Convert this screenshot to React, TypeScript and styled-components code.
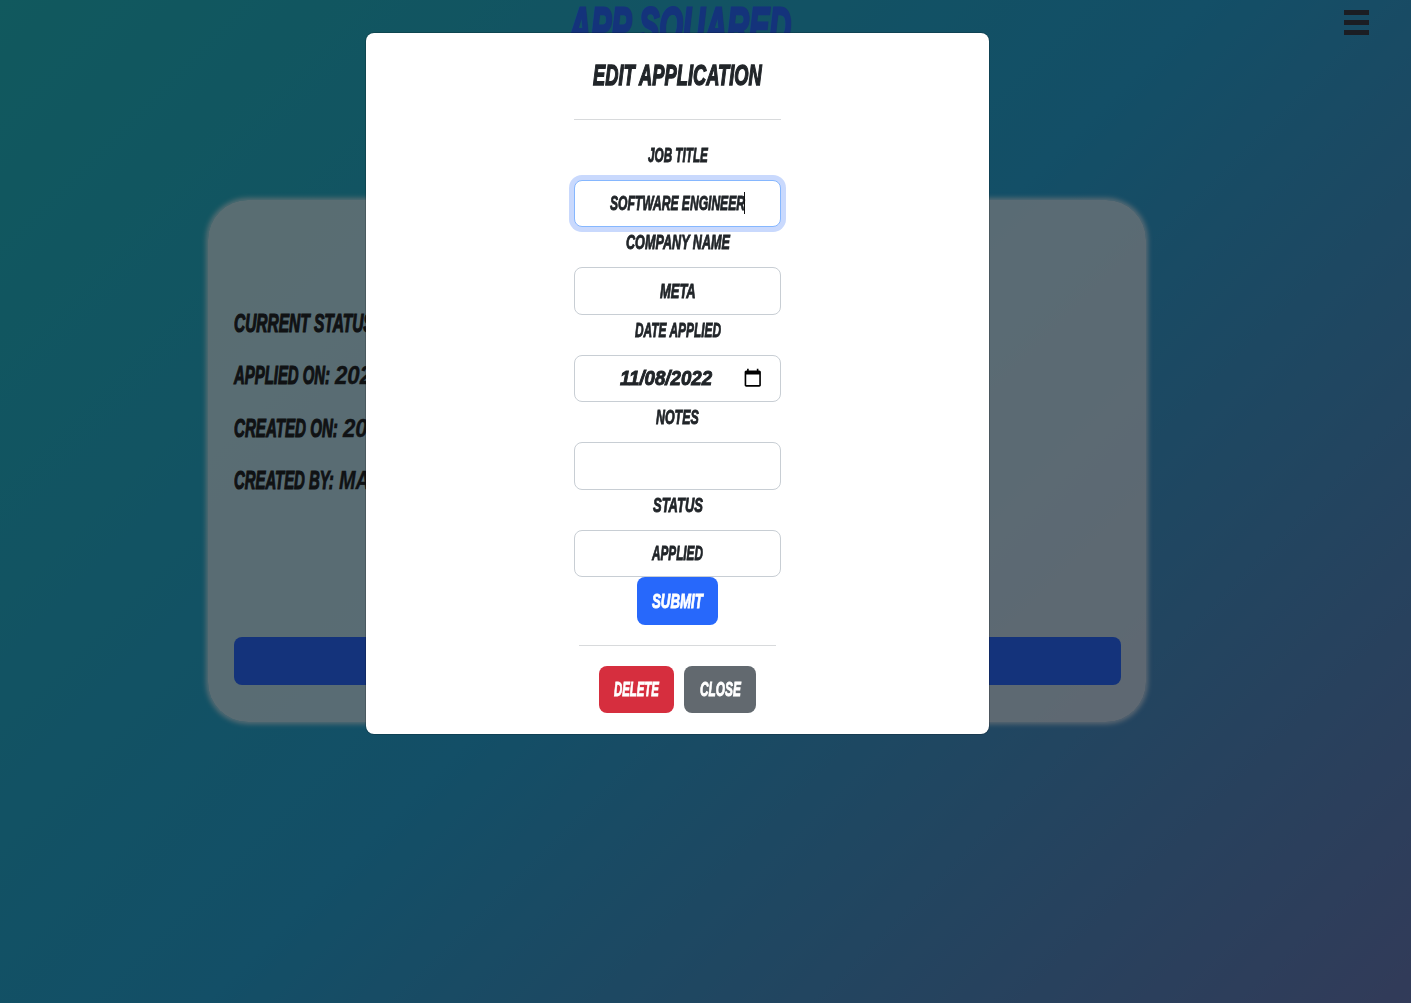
import React, { useLayoutEffect, useRef, useState } from "react";
import styled, { createGlobalStyle, css } from "styled-components";

const GlobalStyle = createGlobalStyle`
  *, *::before, *::after { box-sizing: border-box; }
  body {
    margin: 0;
    color: #212529;
    font-family: "Liberation Sans Narrow", "Liberation Sans", Arial, sans-serif;
    overflow: hidden;
  }
`;

const Frame = styled.span<{ $width: number; $size: number }>`
  display: inline-block;
  flex: none;
  width: ${(p) => p.$width}px;
  height: ${(p) => p.$size}px;
  font-size: ${(p) => p.$size}px;
  line-height: ${(p) => p.$size}px;
  text-align: left;
`;

const Glyphs = styled.span<{ $stroke: number }>`
  display: inline-block;
  font-weight: 700;
  font-style: italic;
  white-space: nowrap;
  transform-origin: 0 50%;
  -webkit-text-stroke: ${(p) => p.$stroke}px currentColor;
`;

interface LetteringProps {
  width: number;
  size?: number;
  stroke?: number;
  children: string;
}

/* Condensed comic lettering: squeezes its text to the given width. */
function Lettering({ width, size = 20.5, stroke = 0.9, children }: LetteringProps) {
  const ref = useRef<HTMLSpanElement>(null);
  const [scale, setScale] = useState(1);
  useLayoutEffect(() => {
    if (ref.current) setScale(width / ref.current.offsetWidth);
  }, [width, size, children]);
  return (
    <Frame $width={width} $size={size}>
      <Glyphs ref={ref} $stroke={stroke} style={{ transform: `scaleX(${scale})` }}>{children}</Glyphs>
    </Frame>
  );
}

const Page = styled.div`
  min-height: 1003px;
  background: linear-gradient(135deg, rgb(34, 178, 188) 0%, rgb(38, 158, 206) 50%, rgb(100, 118, 178) 100%);
`;

const Header = styled.header`
  display: grid;
  grid-template-columns: 1fr auto 1fr;
  height: 199.5px;
  align-items: start;
`;

const Brand = styled.h1`
  grid-column: 2;
  display: flex;
  margin: 0;
  padding-right: 52px;
  color: #2866f6;
`;

const MenuButton = styled.button`
  justify-self: end;
  display: flex;
  flex-direction: column;
  gap: 5px;
  width: 25px;
  margin: 10px 42px 0 0;
  padding: 0;
  border: 0;
  background: none;
`;

const MenuBar = styled.span`
  height: 5px;
  background: #373a47;
`;

const Card = styled.section`
  display: flex;
  flex-direction: column;
  width: 938px;
  height: 522px;
  margin-left: 208px;
  padding: 110px 25px 36.5px 26px;
  border-radius: 40px;
  background: rgba(240, 240, 244, 0.7);
  box-shadow: 0 0 5px 2px rgba(240, 240, 244, 0.7);
`;

const Fact = styled.p`
  display: flex;
  align-items: center;
  gap: 5px;
  height: 27px;
  margin: 0 0 25.5px;
`;

const CardAction = styled.button`
  height: 48px;
  margin-top: auto;
  border: 0;
  border-radius: 8px;
  background: #2866f6;
`;

const Backdrop = styled.div`
  position: fixed;
  inset: 0;
  display: flex;
  align-items: flex-start;
  padding: 32px 0 0 365px;
  background: rgba(0, 0, 0, 0.5);
`;

const Dialog = styled.div`
  display: flex;
  flex-direction: column;
  align-items: center;
  width: 625px;
  height: 703px;
  padding-top: 27px;
  border: 1px solid rgba(0, 0, 0, 0.175);
  border-radius: 9px;
  background: #fff;
  background-clip: padding-box;
`;

const Title = styled.h2`
  display: flex;
  height: 31px;
  margin: 0;
`;

const Rule = styled.hr<{ $width: number; $top: number; $bottom: number }>`
  flex: none;
  width: ${(p) => p.$width}px;
  height: 1px;
  margin: ${(p) => p.$top}px 0 ${(p) => p.$bottom}px;
  border: 0;
  background: #d8dadc;
`;

const Form = styled.form`
  display: flex;
  flex-direction: column;
  align-items: center;
  width: 207px;
`;

const Label = styled.label`
  display: flex;
  height: 40px;
  padding-top: 5px;
`;

const Field = styled.div<{ $focused?: boolean }>`
  position: relative;
  display: flex;
  align-items: center;
  justify-content: center;
  width: 207px;
  height: 47.5px;
  border: 1px solid #c8ced4;
  border-radius: 8px;
  background: #fff;
  ${(p) =>
    p.$focused &&
    css`
      border-color: #86b7fe;
      box-shadow: 0 0 0 5px #c9d9fd;
    `}
`;

const Caret = styled.span`
  position: absolute;
  left: 169px;
  top: 11px;
  width: 1px;
  height: 22px;
  background: #111;
`;

const DateValue = styled.div`
  display: flex;
  align-items: center;
  justify-content: space-between;
  width: 100%;
  padding: 0 17.5px 0 45px;
`;

const Button = styled.button<{ $width: number; $color: string }>`
  display: flex;
  align-items: center;
  justify-content: center;
  width: ${(p) => p.$width}px;
  height: 47.5px;
  padding: 0;
  border: 0;
  border-radius: 8px;
  font-family: inherit;
  color: #fff;
  background: ${(p) => p.$color};
`;

const Actions = styled.div`
  display: flex;
  gap: 10px;
`;

const Calendar = styled.svg`
  margin-top: -1px;
`;

const CalendarIcon = () => (
  <Calendar width="19.5" height="19.5" viewBox="0 0 24 24" fill="#000">
    <path d="M20 3h-1V1h-2v2H7V1H5v2H4c-1.1 0-2 .9-2 2v16c0 1.1.9 2 2 2h16c1.1 0 2-.9 2-2V5c0-1.1-.9-2-2-2zm0 18H4V8h16v13z" />
  </Calendar>
);

const facts = [
  { name: "CURRENT STATUS:", width: 145, value: "APPLIED", valueWidth: 60 },
  { name: "APPLIED ON:", width: 96, value: "2022-11-08", valueWidth: 112 },
  { name: "CREATED ON:", width: 104, value: "2022-11-08", valueWidth: 112 },
  { name: "CREATED BY:", width: 100, value: "MATT", valueWidth: 54 },
];

export default function App() {
  return (
    <>
      <GlobalStyle />
      <Page>
        <Header>
          <Brand><Lettering width={222} size={52} stroke={2.8}>APP SQUARED</Lettering></Brand>
          <MenuButton aria-label="Menu"><MenuBar /><MenuBar /><MenuBar /></MenuButton>
        </Header>
        <Card>
          {facts.map((f) => (
            <Fact key={f.name}>
              <Lettering width={f.width} size={25} stroke={1.2}>{f.name}</Lettering>
              <Lettering width={f.valueWidth} size={25} stroke={0.4}>{f.value}</Lettering>
            </Fact>
          ))}
          <CardAction aria-label="Edit" />
        </Card>
      </Page>
      <Backdrop>
        <Dialog role="dialog">
          <Title><Lettering width={169} size={30} stroke={1.4}>EDIT APPLICATION</Lettering></Title>
          <Rule $width={207} $top={28} $bottom={19.6} />
          <Form>
            <Label><Lettering width={60}>JOB TITLE</Lettering></Label>
            <Field $focused><Lettering width={135}>SOFTWARE ENGINEER</Lettering><Caret /></Field>
            <Label><Lettering width={104}>COMPANY NAME</Lettering></Label>
            <Field><Lettering width={36}>META</Lettering></Field>
            <Label><Lettering width={86}>DATE APPLIED</Lettering></Label>
            <Field>
              <DateValue><Lettering width={92}>11/08/2022</Lettering><CalendarIcon /></DateValue>
            </Field>
            <Label><Lettering width={43}>NOTES</Lettering></Label>
            <Field />
            <Label><Lettering width={50}>STATUS</Lettering></Label>
            <Field><Lettering width={51}>APPLIED</Lettering></Field>
            <Button type="button" $width={81} $color="#2768fb"><Lettering width={51}>SUBMIT</Lettering></Button>
          </Form>
          <Rule $width={197} $top={20.4} $bottom={20} />
          <Actions>
            <Button $width={75} $color="#d62e3e"><Lettering width={45}>DELETE</Lettering></Button>
            <Button $width={72} $color="#62696f"><Lettering width={41}>CLOSE</Lettering></Button>
          </Actions>
        </Dialog>
      </Backdrop>
    </>
  );
}
